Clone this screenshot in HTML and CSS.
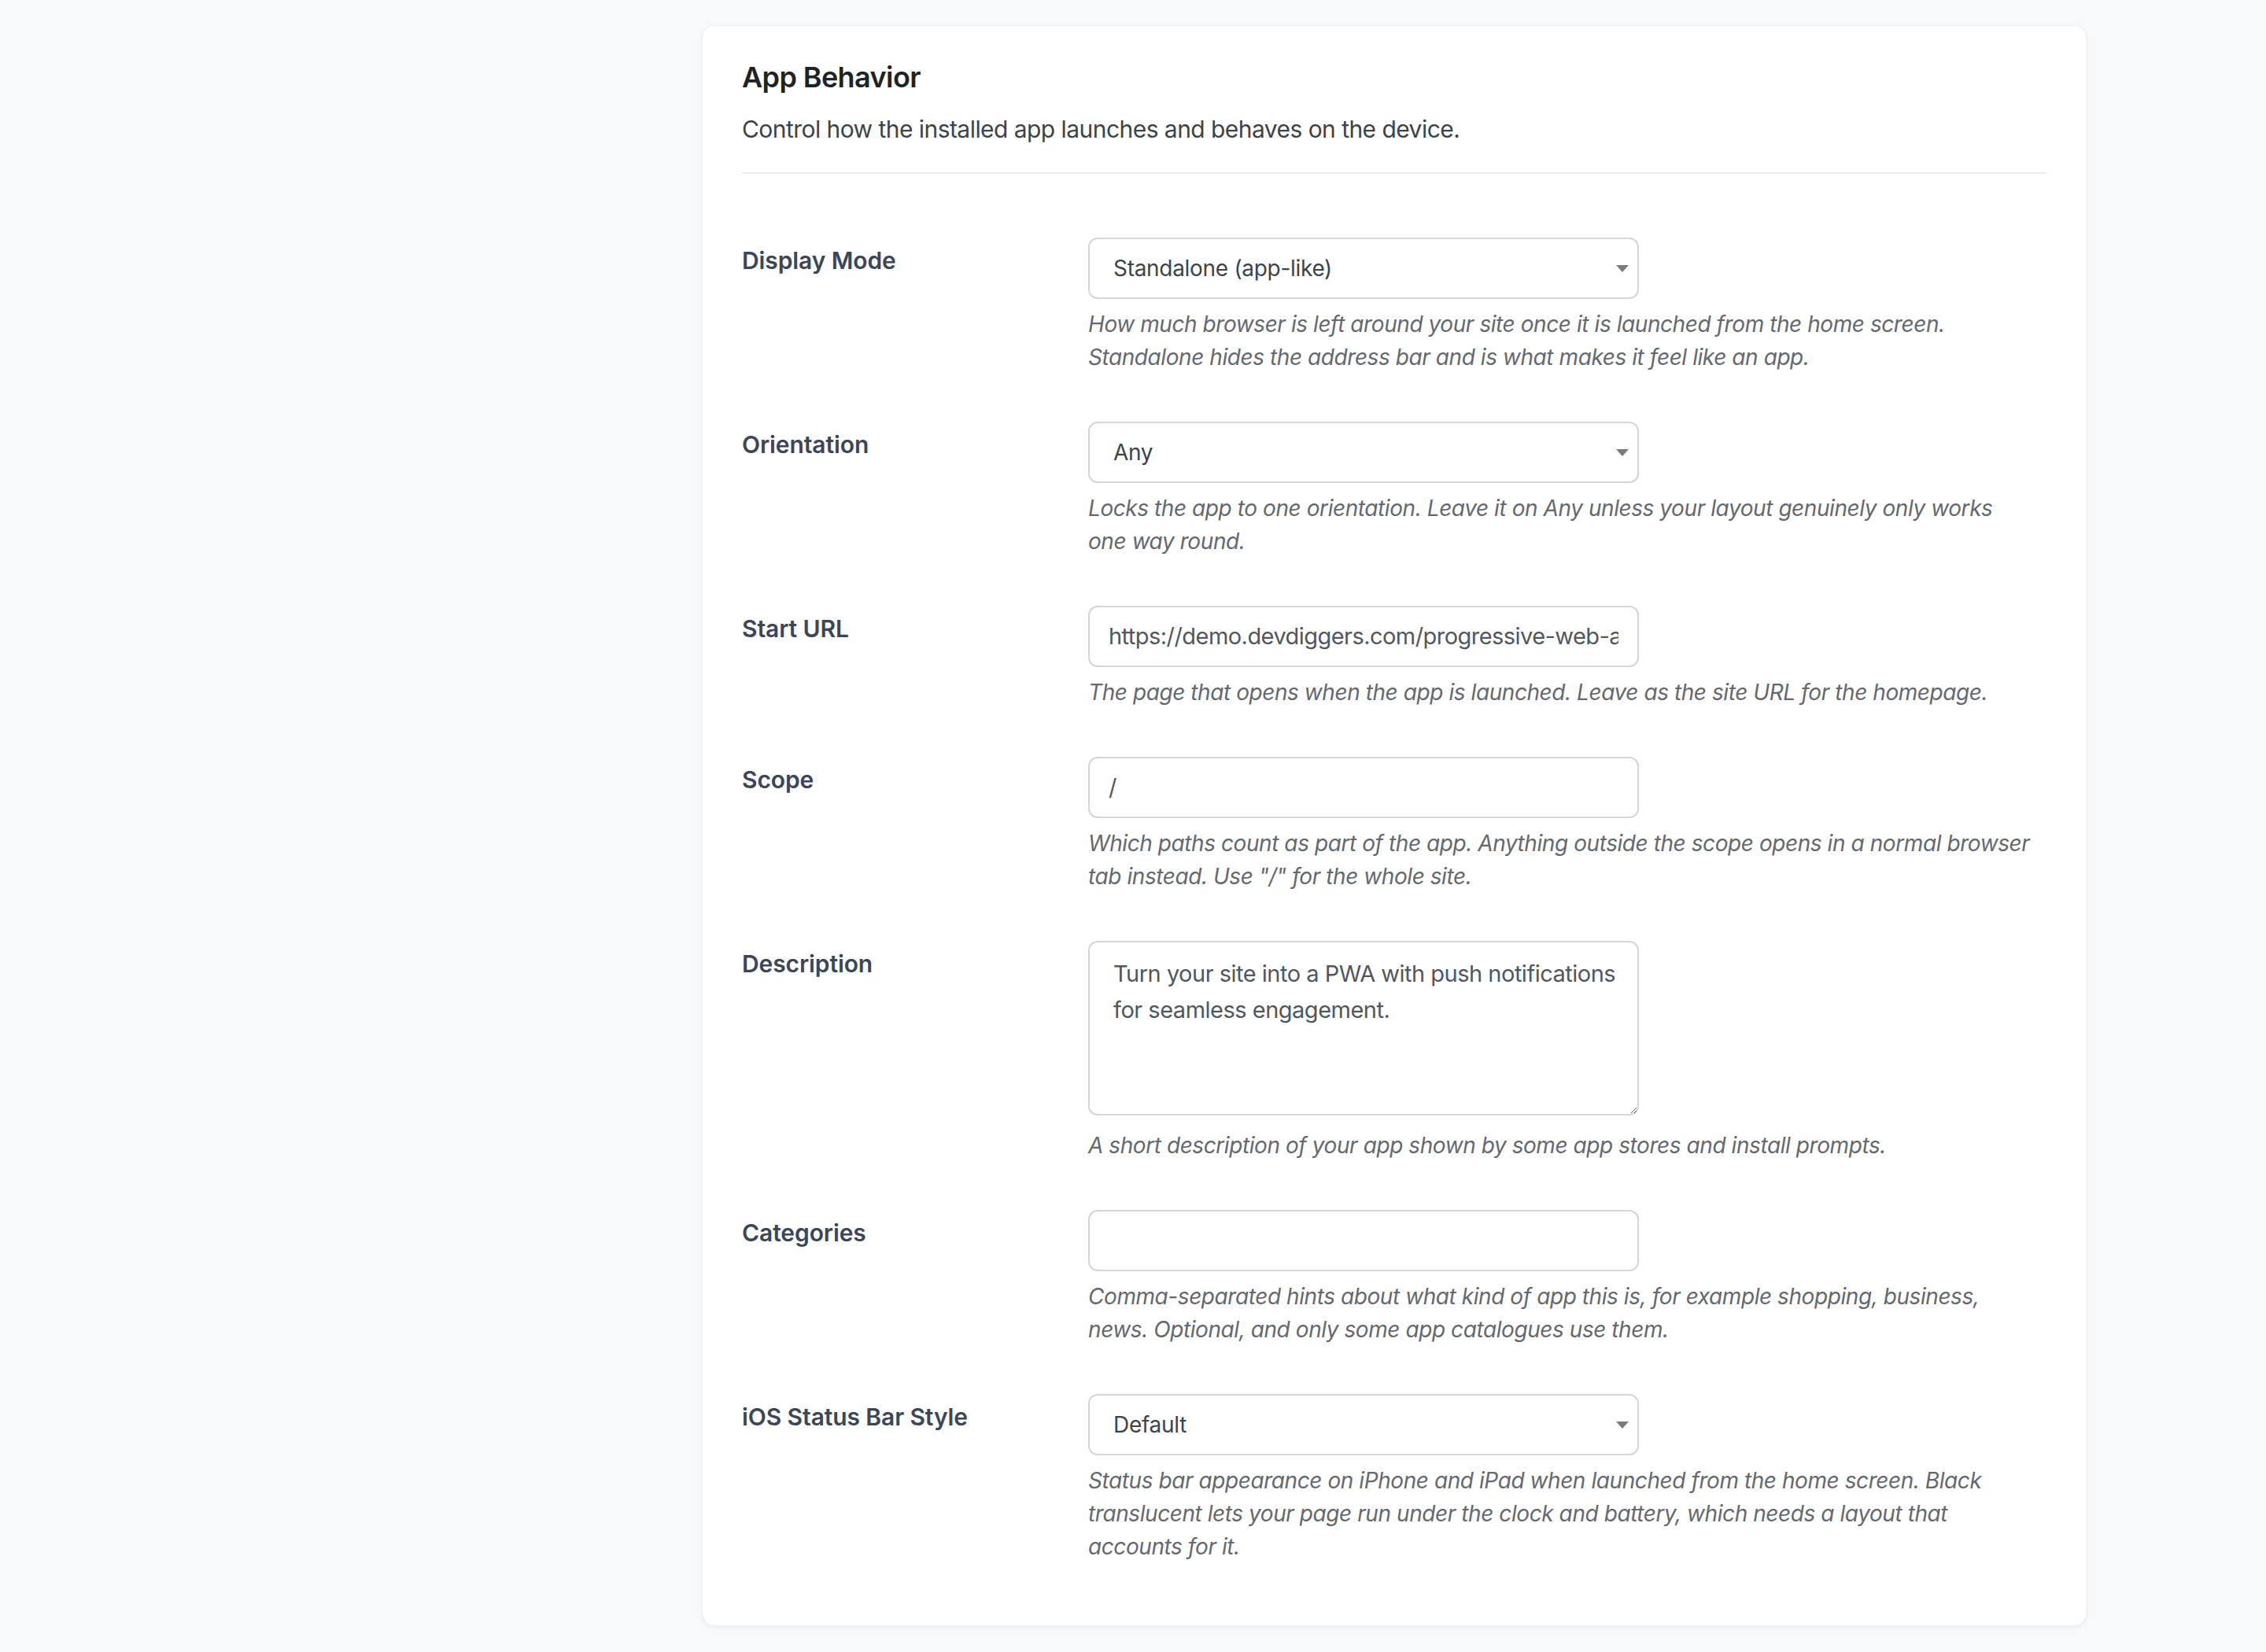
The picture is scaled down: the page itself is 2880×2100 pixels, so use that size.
FILE: index.html
```html
<!DOCTYPE html>
<html lang="en">
<head>
<meta charset="utf-8">
<title>App Behavior</title>
<link rel="stylesheet" href="styles.css">
</head>
<body>
<main class="page">
  <section class="card">
    <h2 class="card-title">App Behavior</h2>
    <p class="card-desc">Control how the installed app launches and behaves on the device.</p>
    <hr class="divider">

    <div class="form">
      <div class="row">
        <label class="label" for="display">Display Mode</label>
        <div class="field">
          <div class="select-wrap">
            <select id="display" class="control select"><option>Standalone (app-like)</option></select>
            <svg class="caret" width="16" height="9" viewBox="0 0 16 9"><path d="M0 0H16L8 9Z" fill="#787c82"/></svg>
          </div>
          <p class="help">How much browser is left around your site once it is launched from the home screen.<br>Standalone hides the address bar and is what makes it feel like an app.</p>
        </div>
      </div>

      <div class="row">
        <label class="label" for="orientation">Orientation</label>
        <div class="field">
          <div class="select-wrap">
            <select id="orientation" class="control select"><option>Any</option></select>
            <svg class="caret" width="16" height="9" viewBox="0 0 16 9"><path d="M0 0H16L8 9Z" fill="#787c82"/></svg>
          </div>
          <p class="help">Locks the app to one orientation. Leave it on Any unless your layout genuinely only works<br>one way round.</p>
        </div>
      </div>

      <div class="row">
        <label class="label" for="start">Start URL</label>
        <div class="field">
          <input id="start" class="control input" type="text" value="https://demo.devdiggers.com/progressive-web-app/">
          <p class="help">The page that opens when the app is launched. Leave as the site URL for the homepage.</p>
        </div>
      </div>

      <div class="row">
        <label class="label" for="scope">Scope</label>
        <div class="field">
          <input id="scope" class="control input" type="text" value="/">
          <p class="help">Which paths count as part of the app. Anything outside the scope opens in a normal browser<br>tab instead. Use "/" for the whole site.</p>
        </div>
      </div>

      <div class="row">
        <label class="label" for="desc">Description</label>
        <div class="field">
          <textarea id="desc" class="control textarea">Turn your site into a PWA with push notifications for seamless engagement.</textarea>
          <p class="help">A short description of your app shown by some app stores and install prompts.</p>
        </div>
      </div>

      <div class="row">
        <label class="label" for="cats">Categories</label>
        <div class="field">
          <input id="cats" class="control input" type="text" value="">
          <p class="help">Comma-separated hints about what kind of app this is, for example shopping, business,<br>news. Optional, and only some app catalogues use them.</p>
        </div>
      </div>

      <div class="row">
        <label class="label" for="ios">iOS Status Bar Style</label>
        <div class="field">
          <div class="select-wrap">
            <select id="ios" class="control select"><option>Default</option></select>
            <svg class="caret" width="16" height="9" viewBox="0 0 16 9"><path d="M0 0H16L8 9Z" fill="#787c82"/></svg>
          </div>
          <p class="help">Status bar appearance on iPhone and iPad when launched from the home screen. Black<br>translucent lets your page run under the clock and battery, which needs a layout that<br>accounts for it.</p>
        </div>
      </div>
    </div>
  </section>
</main>
</body>
</html>
```

FILE: styles.css
```css
* { box-sizing: border-box; }

html, body {
  margin: 0;
  padding: 0;
  background: #f8f9fb;
}

body {
  font-family: Inter, "Noto Sans", "Liberation Sans", sans-serif;
  color: #3c434a;
  min-height: 2100px;
}

.page {
  padding: 32px 0 0 892px;
}

.card {
  width: 1760px;
  background: #ffffff;
  border: 1px solid #f0f1f3;
  border-radius: 16px;
  box-shadow: 0 2px 6px rgba(16, 24, 40, 0.05);
  padding: 42px 50px 48px;
}

.card-title {
  margin: 0;
  font-size: 36px;
  line-height: 1.3;
  font-weight: 600;
  color: #1d2327;
  letter-spacing: -0.6px;
}

.card-desc {
  margin: 20px 0 0;
  font-size: 30px;
  line-height: 45px;
  color: #3c434a;
  letter-spacing: -0.55px;
}

.divider {
  margin: 32px 0 0;
  border: 0;
  height: 2px;
  background: #ebedf0;
}

.form {
  margin-top: 51px;
}

.row {
  display: grid;
  grid-template-columns: 420px 1fr;
}

.label {
  padding: 40px 20px 0 0;
  font-size: 30px;
  line-height: 1.3;
  font-weight: 600;
  color: #3b4758;
  letter-spacing: -0.1px;
}

.field {
  display: flex;
  flex-direction: column;
  align-items: flex-start;
  padding: 30px 0 31px 20px;
}

.control {
  display: block;
  width: 700px;
  height: 78px;
  margin: 0;
  border: 2px solid #d3d5d8;
  border-radius: 12px;
  background: #ffffff;
  font-family: inherit;
  outline: none;
}

.select-wrap {
  position: relative;
  width: 700px;
}

.select {
  appearance: none;
  -webkit-appearance: none;
  padding: 0 60px 0 30px;
  font-size: 28px;
  letter-spacing: -0.3px;
  color: #3c434a;
}

.caret {
  position: absolute;
  right: 13px;
  top: 35px;
  display: block;
}

.input {
  padding: 0 24px;
  font-size: 29px;
  letter-spacing: -0.55px;
  color: #50575e;
}

.textarea {
  height: 222px;
  padding: 17px 20px 17px 30px;
  font-size: 29px;
  line-height: 46px;
  letter-spacing: -0.5px;
  color: #50575e;
  resize: vertical;
  margin-bottom: 6px;
}

.help {
  margin: 11px 0 0;
  font-size: 28px;
  line-height: 42px;
  font-style: italic;
  color: #646970;
  letter-spacing: -0.43px;
  white-space: nowrap;
}
```
